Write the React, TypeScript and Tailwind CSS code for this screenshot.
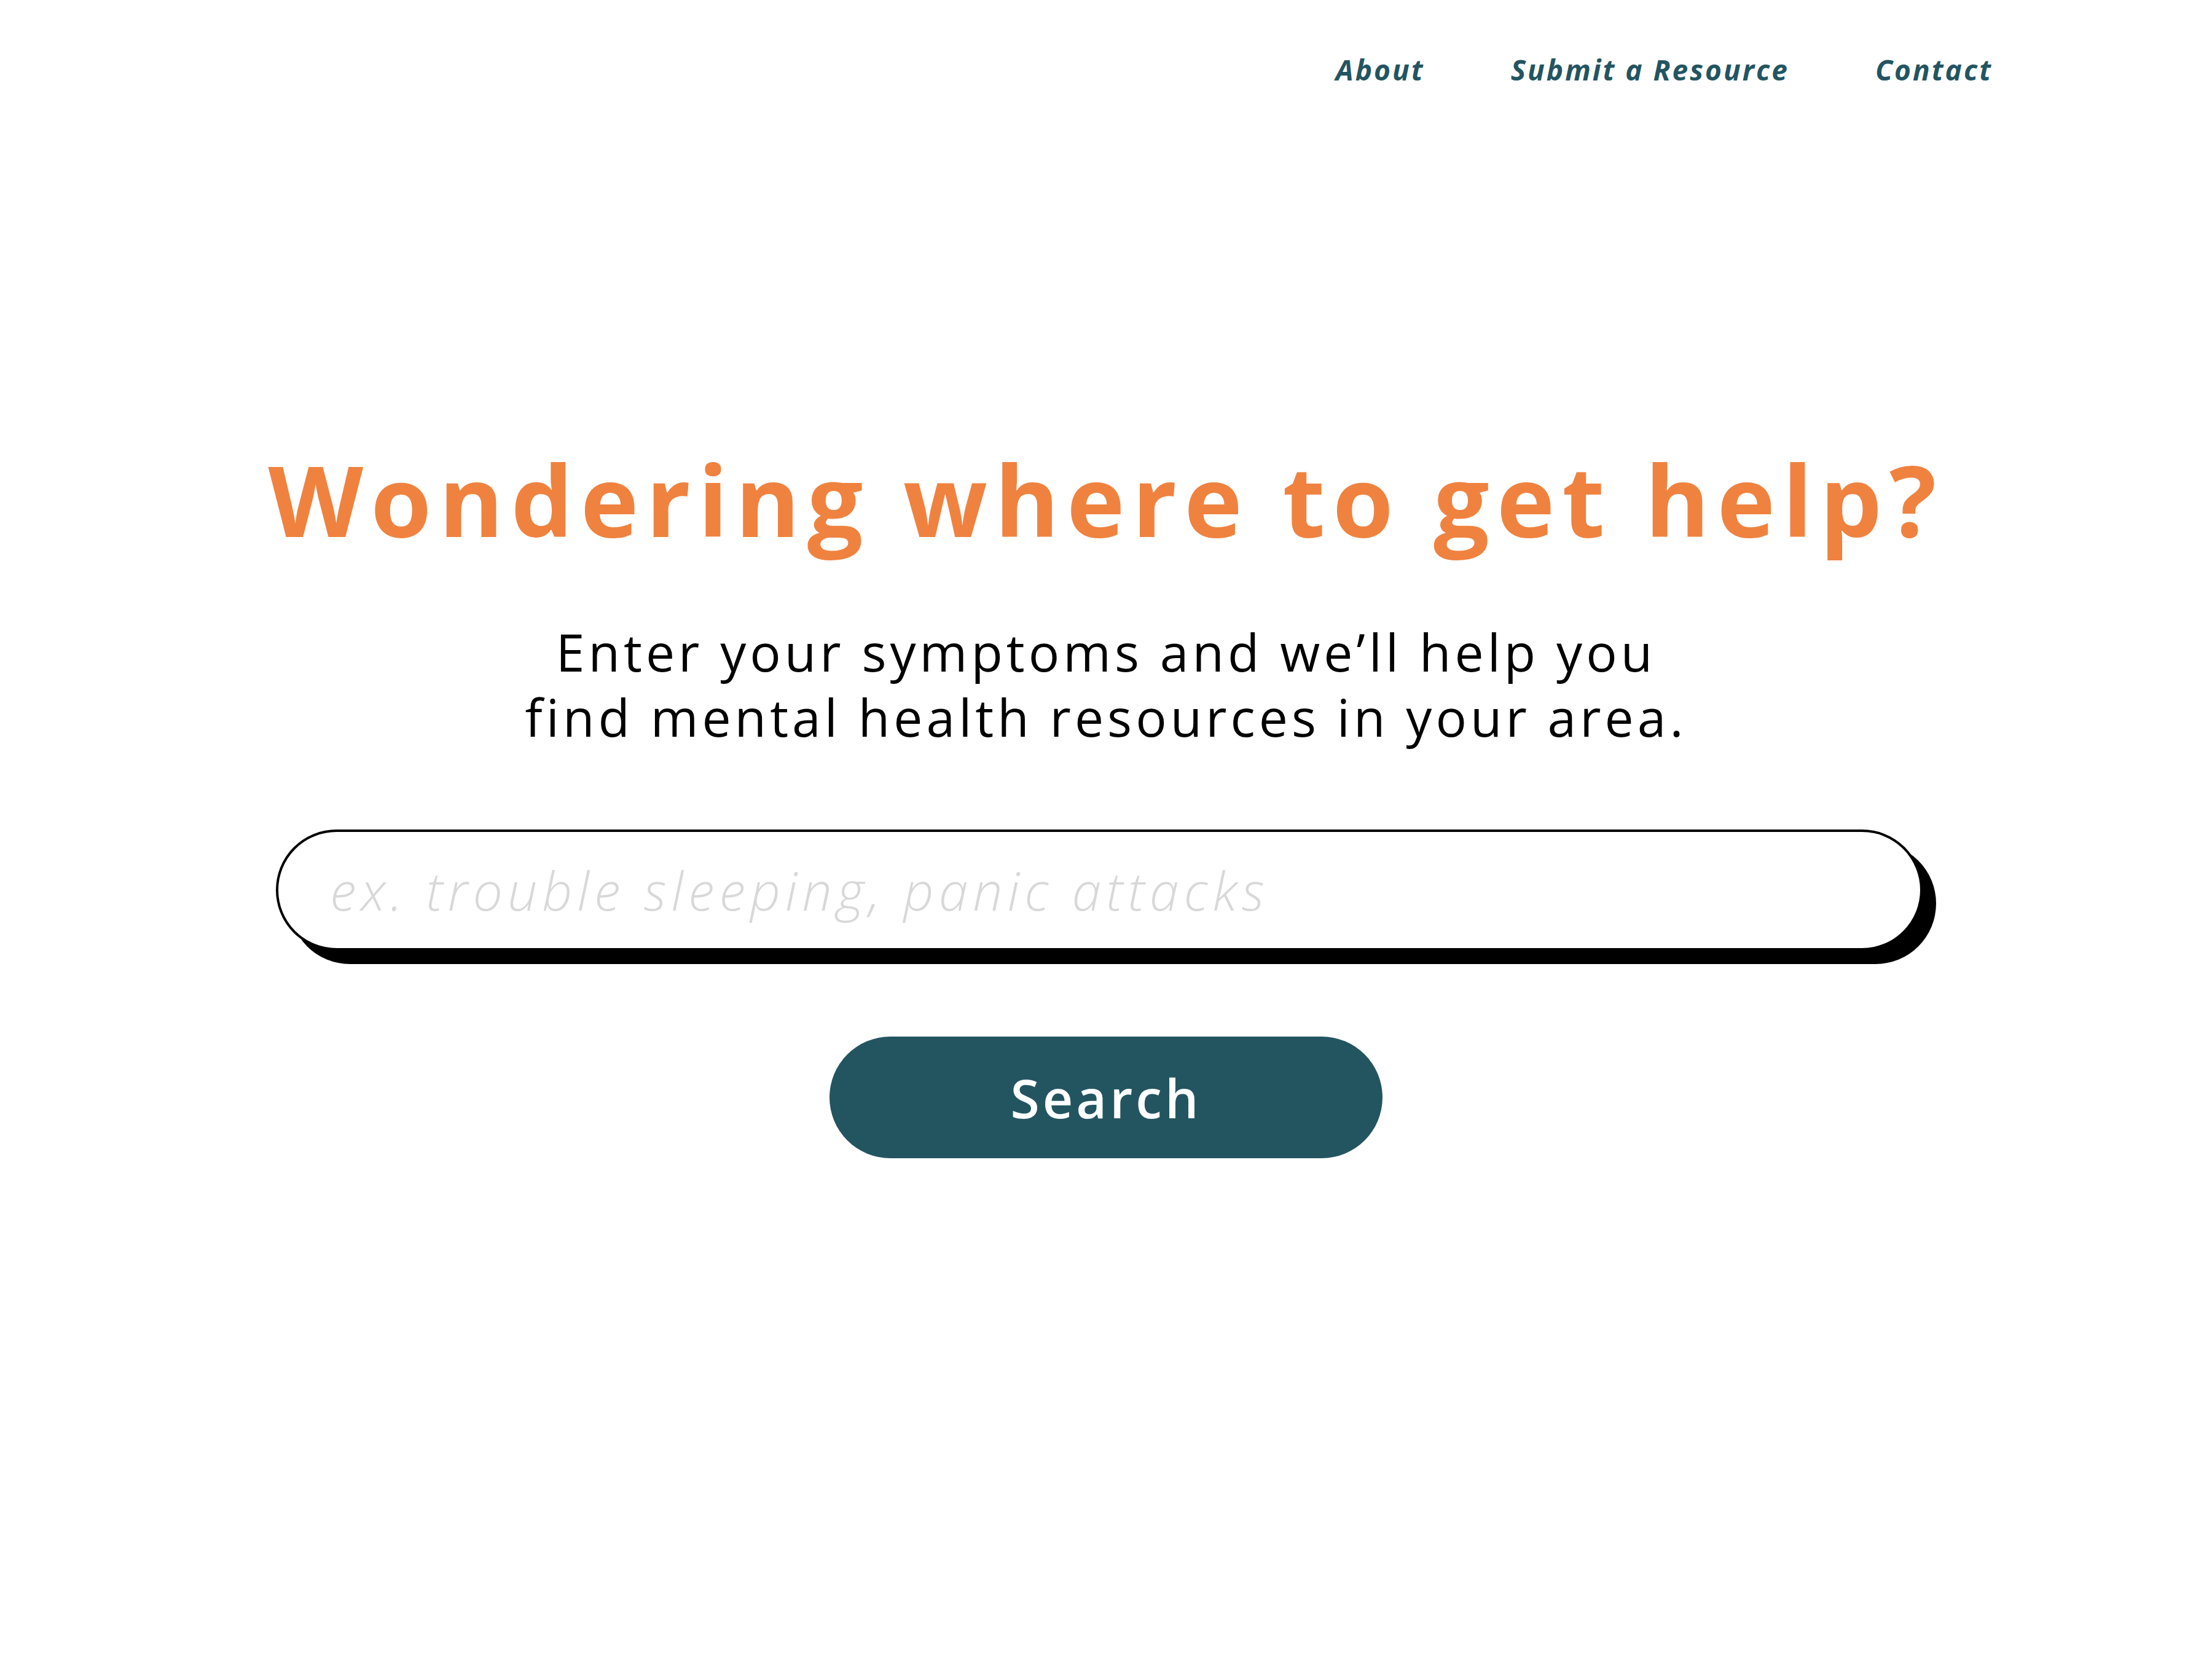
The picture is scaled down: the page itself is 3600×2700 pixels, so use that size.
import React from "react";

export default function App() {
  return (
    <div className="min-h-[2700px] w-full bg-white font-['Open_Sans','Lato',sans-serif]">
      <nav className="flex justify-end gap-[140px] pr-[357px] pt-[90px] text-[46px] font-bold italic leading-none tracking-[3px] text-[#235561]">
        <a href="#">About</a>
        <a href="#">Submit a Resource</a>
        <a href="#">Contact</a>
      </nav>
      <main className="flex flex-col items-center">
        <h1 className="mt-[596px] text-[160px] font-bold leading-none tracking-[12px] text-[#f0823f]">
          Wondering where to get help?
        </h1>
        <p className="mt-[116px] text-center text-[84px] font-normal leading-[106px] tracking-[6px] text-black">
          Enter your symptoms and we’ll help you
          <br />
          find mental health resources in your area.
        </p>
        <div className="mt-[130px] mr-[22px] w-[2680px] rounded-full border-[4px] border-black bg-white shadow-[22px_22px_0_0_#000]">
          <input
            type="text"
            placeholder="ex. trouble sleeping, panic attacks"
            className="h-[189px] w-full rounded-full bg-transparent pl-[84px] pr-[72px] text-[86px] font-light italic tracking-[8px] text-black outline-none placeholder:text-[#d8d8d8]"
          />
        </div>
        <button className="mt-[140px] h-[198px] w-[900px] rounded-full bg-[#235561] text-[86px] font-semibold tracking-[5px] text-white">
          Search
        </button>
      </main>
    </div>
  );
}
